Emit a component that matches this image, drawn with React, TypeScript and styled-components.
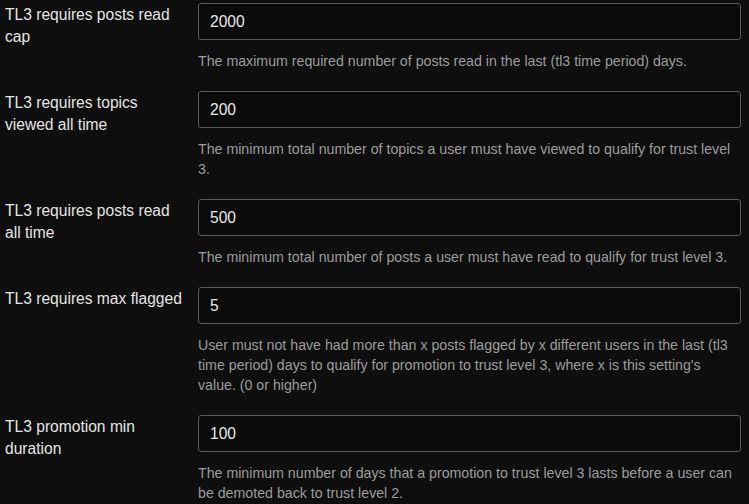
import { createGlobalStyle } from 'styled-components';
import styled from 'styled-components';

const GlobalStyle = createGlobalStyle`
  html, body {
    margin: 0;
    padding: 0;
    background: #0e0e0e;
  }
  body {
    font-family: "Liberation Sans", Arial, sans-serif;
  }
`;

const StyledPage = styled.div`
  width: 749px;
  height: 504px;
  overflow: hidden;
  background: #0e0e0e;
  padding: 3px 8px 0 5px;
  box-sizing: border-box;
`;

const StyledRow = styled.div`
  display: flex;
  align-items: flex-start;
  padding-bottom: 20px;
`;

const StyledLabel = styled.div`
  width: 193px;
  flex: 0 0 193px;
  padding-top: 1px;
  padding-right: 10px;
  box-sizing: border-box;
  color: #e4e4e4;
  font-size: 15.6px;
  line-height: 22px;
`;

const StyledControl = styled.div`
  flex: 1 1 auto;
  min-width: 0;
`;

const StyledInput = styled.input`
  display: block;
  width: 100%;
  height: 37px;
  box-sizing: border-box;
  margin: 0;
  padding: 0 11px;
  background: #0a0a0a;
  border: 1px solid #5a5a5a;
  border-radius: 3px;
  color: #e8e8e8;
  font-family: "Liberation Sans", Arial, sans-serif;
  font-size: 15.6px;
  outline: none;
`;

const StyledHelp = styled.div`
  margin-top: 11px;
  padding-right: 8px;
  color: #9c9c9c;
  font-size: 14.2px;
  line-height: 20px;
`;

const settings = [
  {
    label: 'TL3 requires posts read cap',
    value: '2000',
    help: 'The maximum required number of posts read in the last (tl3 time period) days.',
  },
  {
    label: 'TL3 requires topics viewed all time',
    value: '200',
    help: 'The minimum total number of topics a user must have viewed to qualify for trust level 3.',
  },
  {
    label: 'TL3 requires posts read all time',
    value: '500',
    help: 'The minimum total number of posts a user must have read to qualify for trust level 3.',
  },
  {
    label: 'TL3 requires max flagged',
    value: '5',
    help: "User must not have had more than x posts flagged by x different users in the last (tl3 time period) days to qualify for promotion to trust level 3, where x is this setting's value. (0 or higher)",
  },
  {
    label: 'TL3 promotion min duration',
    value: '100',
    help: 'The minimum number of days that a promotion to trust level 3 lasts before a user can be demoted back to trust level 2.',
  },
];

function SettingRow({ label, value, help }: { label: string; value: string; help: string }) {
  return (
    <StyledRow>
      <StyledLabel>{label}</StyledLabel>
      <StyledControl>
        <StyledInput type="text" defaultValue={value} />
        <StyledHelp>{help}</StyledHelp>
      </StyledControl>
    </StyledRow>
  );
}

export default function App() {
  return (
    <>
      <GlobalStyle />
      <StyledPage>
        {settings.map((s) => (
          <SettingRow key={s.label} {...s} />
        ))}
      </StyledPage>
    </>
  );
}
